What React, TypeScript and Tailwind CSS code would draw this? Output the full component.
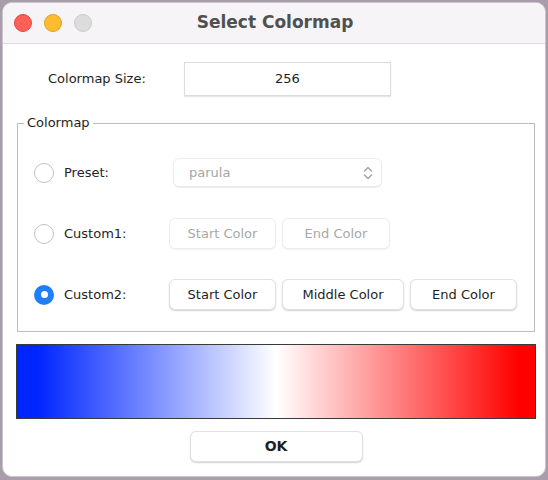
import React from 'react';

const font = { fontFamily: '"DejaVu Sans", "Liberation Sans", sans-serif' };

const Radio: React.FC<{ checked?: boolean }> = ({ checked }) =>
  checked ? (
    <span className="w-[20px] h-[20px] rounded-full bg-[#1f7ff6] flex items-center justify-center shrink-0">
      <span className="w-[7px] h-[7px] rounded-full bg-white"></span>
    </span>
  ) : (
    <span className="w-[20px] h-[20px] rounded-full border border-[#c2c2c2] bg-white shrink-0"></span>
  );

const Btn: React.FC<{ label: string; w: string; disabled?: boolean }> = ({ label, w, disabled }) => (
  <button
    className={`${w} h-[31px] rounded-[6px] bg-white text-[13px] ${
      disabled
        ? 'text-[#a8a8a8] border border-[#ececec] shadow-[0_1px_1px_rgba(0,0,0,0.06)]'
        : 'text-[#1e1e1e] border border-[#e0e0e0] shadow-[0_1px_1.5px_rgba(0,0,0,0.18)]'
    }`}
  >
    {label}
  </button>
);

const App: React.FC = () => {
  return (
    <div className="w-[548px] h-[480px] bg-[#a99cab] pt-[2px] pl-[2px] overflow-hidden" style={font}>
      <div className="w-[544px] h-[475px] rounded-[10px] bg-white overflow-hidden flex flex-col border border-[#c9c6ca]">
        {/* title bar */}
        <div className="h-[41px] bg-[#f6f4f6] border-b border-[#dddbdd] grid grid-cols-[1fr_auto_1fr] items-center shrink-0">
          <div className="flex items-center gap-[12px] pl-[11px]">
            <span className="w-[18px] h-[18px] rounded-full bg-[#fe5f57] border border-[#e2463f]"></span>
            <span className="w-[18px] h-[18px] rounded-full bg-[#febc2e] border border-[#dea123]"></span>
            <span className="w-[18px] h-[18px] rounded-full bg-[#dcdcdc] border border-[#cacaca]"></span>
          </div>
          <div className="text-[17px] font-bold text-[#505050] pl-[2px]">Select Colormap</div>
          <div></div>
        </div>

        {/* size row */}
        <div className="flex items-center pt-[18px] pl-[45px]">
          <span className="w-[136px] text-[13px] text-[#1e1e1e]">Colormap Size:</span>
          <div className="w-[207px] h-[34px] border border-[#dcdcdc] shadow-[0_1px_1px_rgba(0,0,0,0.1)] flex items-center justify-center text-[13px] text-[#1e1e1e]">
            256
          </div>
        </div>

        {/* group box */}
        <fieldset className="mx-[14px] mt-[19px] w-[518px] border border-[#bdbdbd] px-0 pt-[26px] pb-[21px] flex flex-col gap-[30px]">
          <legend className="ml-[6px] px-[3px] text-[13px] leading-[16px] text-[#1e1e1e]">Colormap</legend>

          <div className="flex items-center h-[31px] pl-[16px]">
            <Radio />
            <span className="ml-[10px] w-[105px] text-[13px] text-[#1e1e1e]">Preset:</span>
            <div className="ml-[4px] w-[209px] h-[29px] rounded-[6px] bg-white border border-[#ececec] shadow-[0_1px_1px_rgba(0,0,0,0.08)] flex items-center justify-between pl-[15px] pr-[8px]">
              <span className="text-[13px] text-[#a5a5a5]">parula</span>
              <svg width="10" height="16" viewBox="0 0 10 16" fill="none" stroke="#a8a8a8" strokeWidth="1.6" strokeLinecap="round" strokeLinejoin="round">
                <path d="M1.5 6 L5 2.5 L8.5 6" />
                <path d="M1.5 10 L5 13.5 L8.5 10" />
              </svg>
            </div>
          </div>

          <div className="flex items-center h-[31px] pl-[16px]">
            <Radio />
            <span className="ml-[10px] w-[105px] text-[13px] text-[#1e1e1e]">Custom1:</span>
            <div className="flex gap-[6px]">
              <Btn label="Start Color" w="w-[107px]" disabled />
              <Btn label="End Color" w="w-[108px]" disabled />
            </div>
          </div>

          <div className="flex items-center h-[31px] pl-[16px]">
            <Radio checked />
            <span className="ml-[10px] w-[105px] text-[13px] text-[#1e1e1e]">Custom2:</span>
            <div className="flex gap-[6px]">
              <Btn label="Start Color" w="w-[107px]" />
              <Btn label="Middle Color" w="w-[122px]" />
              <Btn label="End Color" w="w-[107px]" />
            </div>
          </div>
        </fieldset>

        {/* colormap preview */}
        <div className="mx-[13px] mt-[12px] w-[520px] h-[75px] border border-[#3a3a3a] bg-[linear-gradient(to_right,#0026ff_4%,#ffffff_50%,#ff0000_97%)]"></div>

        <div className="flex justify-center mt-[12px] pl-[4px]">
          <button className="w-[173px] h-[31px] rounded-[6px] bg-white border border-[#e0e0e0] shadow-[0_1px_1.5px_rgba(0,0,0,0.18)] text-[14px] font-semibold text-[#1e1e1e]">
            OK
          </button>
        </div>
      </div>
    </div>
  );
};

export default App;
